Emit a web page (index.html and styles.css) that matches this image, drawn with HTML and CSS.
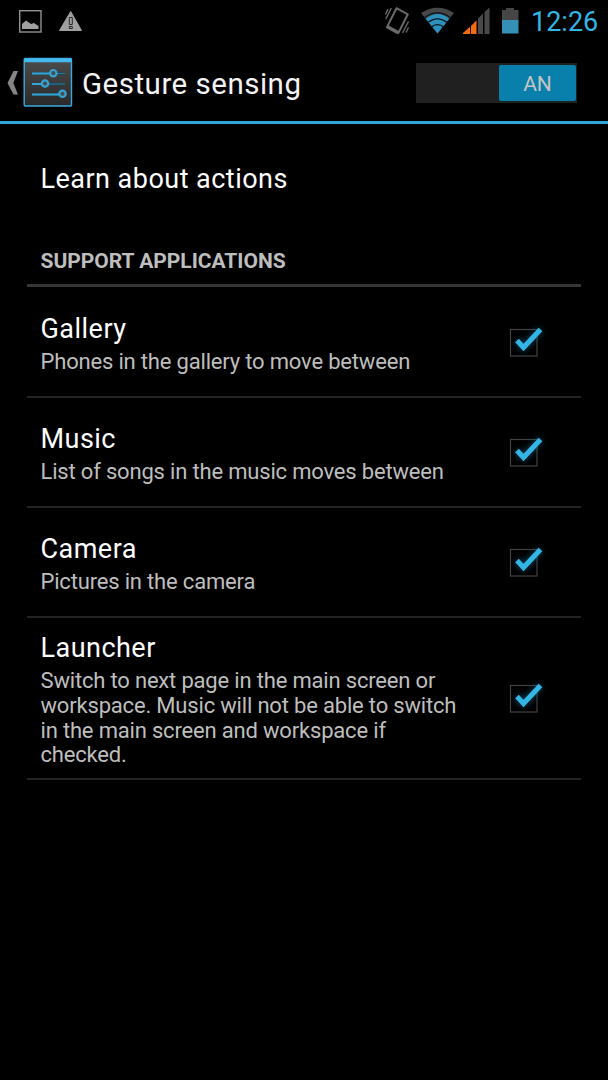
FILE: index.html
```html
<!DOCTYPE html>
<html lang="en">
<head>
<meta charset="utf-8">
<title>Gesture sensing</title>
<link rel="stylesheet" href="styles.css">
</head>
<body>
<svg class="defs" width="0" height="0" aria-hidden="true">
  <defs>
    <filter id="glow" x="-60%" y="-60%" width="220%" height="220%"><feGaussianBlur stdDeviation="3"/></filter>
    <symbol id="check" viewBox="0 0 50 50">
      <rect x="10.500" y="14.500" width="26.500" height="26.500" fill="none" stroke="#424242" stroke-width="1.200"/>
      <path d="M17 25.500l6.500 7L40.500 14.500" fill="none" stroke="#126b90" stroke-width="6" opacity=".65" filter="url(#glow)"/>
      <path d="M17 25.500l6.500 7L40.500 14.500" fill="none" stroke="#33b5e5" stroke-width="5"/>
    </symbol>
  </defs>
</svg>
<div class="status">
  <svg class="status-left" width="110" height="44" viewBox="0 0 110 44">
    <rect x="19.700" y="10.700" width="21.300" height="21.300" fill="none" stroke="#929292" stroke-width="1.400"/>
    <path d="M22 29v-5l4-3.500 5 3.500 3-1 4.500 3v3z" fill="#a0a0a0"/>
    <path d="M70.700 11.500L81.500 30.500h-22z" fill="#a0a0a0" stroke="#a0a0a0" stroke-width="1" stroke-linejoin="round"/>
    <path d="M69.300 17.500h3v7h-3zM69.300 26.500h3v2h-3z" fill="#a0a0a0" stroke="#282828" stroke-width="1"/>
  </svg>
  <svg class="status-icons" width="150" height="44" viewBox="375 0 150 44">
    <g fill="none" stroke="#6a6a6a">
      <path d="M396.500 8.200l11.300 6.100-9.500 18.800-11.300-6z" stroke-width="2" stroke-linejoin="round"/>
      <path d="M387 26.500l11 6" stroke-width="3.200"/>
      <path d="M391.300 8l-5.500 11M388 9l-2.500 5.500M408.500 21.500l-6 11.500M408.500 27.500l-2.500 5" stroke-width="1.400"/>
    </g>
    <path d="M437.500 33.500L421 13q16.500-10.500 33 0z" fill="#474747"/>
    <path d="M437.500 33.500L425.800 18.800q11.700-9.500 23.400 0z" fill="#2c91bd"/>
    <path d="M424 18.200q13.500-10.500 27 0M427.500 22.800q10-8 20 0M431 27.300q6.500-5.300 13 0" fill="none" stroke="#06141b" stroke-width="1.300"/>
    <path d="M463 34v-1l7-6.300V34z" fill="#f56a10"/>
    <path d="M471 34v-8l5.500-5.800V34z" fill="#f56a10"/>
    <path d="M478 34V18.500l5-5V34zM484.500 34V12l5-4.500V34z" fill="#494949"/>
    <path d="M502 10h4V8h8v2h4.500v10H502z" fill="#454545"/>
    <rect x="502" y="20" width="16.500" height="13.500" fill="#3590b7"/>
  </svg>
  <span class="clock">12:26</span>
</div>
<header class="bar">
  <svg class="nav" width="76" height="78" viewBox="0 44 76 78">
    <defs><linearGradient id="tile" x2="0" y2="1"><stop offset="0" stop-color="#4c4c4c"/><stop offset="1" stop-color="#292929"/></linearGradient></defs>
    <path d="M13.500 71H18l-4.700 12L18 94.500h-4.500L7.500 83z" fill="#858585"/>
    <rect x="24.200" y="58.500" width="47.300" height="47.500" rx="1" fill="url(#tile)" stroke="#3aaade" stroke-width="1.400"/>
    <path d="M24 58.500h47.500v3.700H24z" fill="#43b9ed"/>
    <path d="M32 73.500h33M32 84h33M32 94.500h31" stroke="#1d485b" stroke-width="2.500"/>
    <path d="M32 73.500h18M32 84h10M32 94.500h27" stroke="#36a4d3" stroke-width="1.800"/>
    <path d="M56 73.500h9M48 84h17" stroke="#2b7797" stroke-width="1.200"/>
    <g fill="#454d51" stroke="#36a4d3" stroke-width="2.200"><circle cx="53.300" cy="73.200" r="3.200"/><circle cx="45" cy="83.500" r="3.200"/><circle cx="62.500" cy="93.800" r="3.200"/></g>
  </svg>
  <h1 class="bar-title">Gesture sensing</h1>
  <div class="switch"><span class="switch-thumb">AN</span></div>
</header>
<main class="list">
  <div class="item link"><h2 class="title learn">Learn about actions</h2></div>
  <h3 class="section">SUPPORT APPLICATIONS</h3>
  <div class="item first"><div class="text"><h2 class="title">Gallery</h2><p class="summary">Phones in the gallery to move between</p></div><svg class="check"><use href="#check"/></svg></div>
  <div class="item"><div class="text"><h2 class="title">Music</h2><p class="summary">List of songs in the music moves between</p></div><svg class="check"><use href="#check"/></svg></div>
  <div class="item"><div class="text"><h2 class="title">Camera</h2><p class="summary">Pictures in the camera</p></div><svg class="check"><use href="#check"/></svg></div>
  <div class="item tall"><div class="text"><h2 class="title">Launcher</h2><p class="summary">Switch to next page in the main screen or<br>workspace. Music will not be able to switch<br>in the main screen and workspace if<br>checked.</p></div><svg class="check"><use href="#check"/></svg></div>
</main>
</body>
</html>
```
FILE: styles.css
```css
* { box-sizing: border-box; }
body { margin: 0; width: 608px; height: 1080px; overflow: hidden; background: #000; color: #fff; font-family: Roboto, sans-serif; }
h1, h2, h3, p { margin: 0; font-weight: 400; white-space: nowrap; }
svg { display: block; flex: none; }
.defs { position: absolute; }
.status { display: flex; height: 44px; }
.status-icons { margin-left: 265px; }
.clock { margin-left: 6px; font-size: 27px; line-height: 44px; color: #33b5e5; }
.bar { display: flex; align-items: center; height: 80px; padding-right: 31px; border-bottom: 3px solid #2fa7d8; }
.nav { margin-top: 1px; }
.bar-title { margin-left: 6px; font-size: 29.5px; letter-spacing: 0.5px; line-height: 40px; margin-top: 3px; color: #f3f3f3; }
.switch { display: flex; justify-content: flex-end; width: 161px; height: 40px; margin-left: auto; margin-top: 1px; padding: 2px 1px 2px 2px; background: #202020; }
.switch-thumb { width: 77px; height: 36px; border-radius: 2px; background: #0880ab; color: #c4c4c4; font-size: 21px; line-height: 38px; text-align: center; }
.list { padding: 0 27px; }
.item { display: flex; align-items: center; justify-content: space-between; height: 110px; padding: 2px 31px 0 13.5px; border-bottom: 2px solid #232323; }
.item.link { padding: 0 14px 1px 13.5px; border: 0; }
.item.first { height: 111px; padding-top: 3px; }
.item.tall { height: 162px; }
.title { font-size: 27px; letter-spacing: 0.47px; line-height: 36px; }
.section { height: 53px; padding: 15px 13.5px 0; border-bottom: 3px solid #353535; font-size: 21px; font-weight: 700; line-height: 25px; letter-spacing: -0.02px; color: #bebebe; }
.summary { margin-top: 3px; font-size: 22px; letter-spacing: -0.18px; line-height: 24.7px; color: #bebebe; }
.check { width: 50px; height: 50px; margin-bottom: 7px; }
```
